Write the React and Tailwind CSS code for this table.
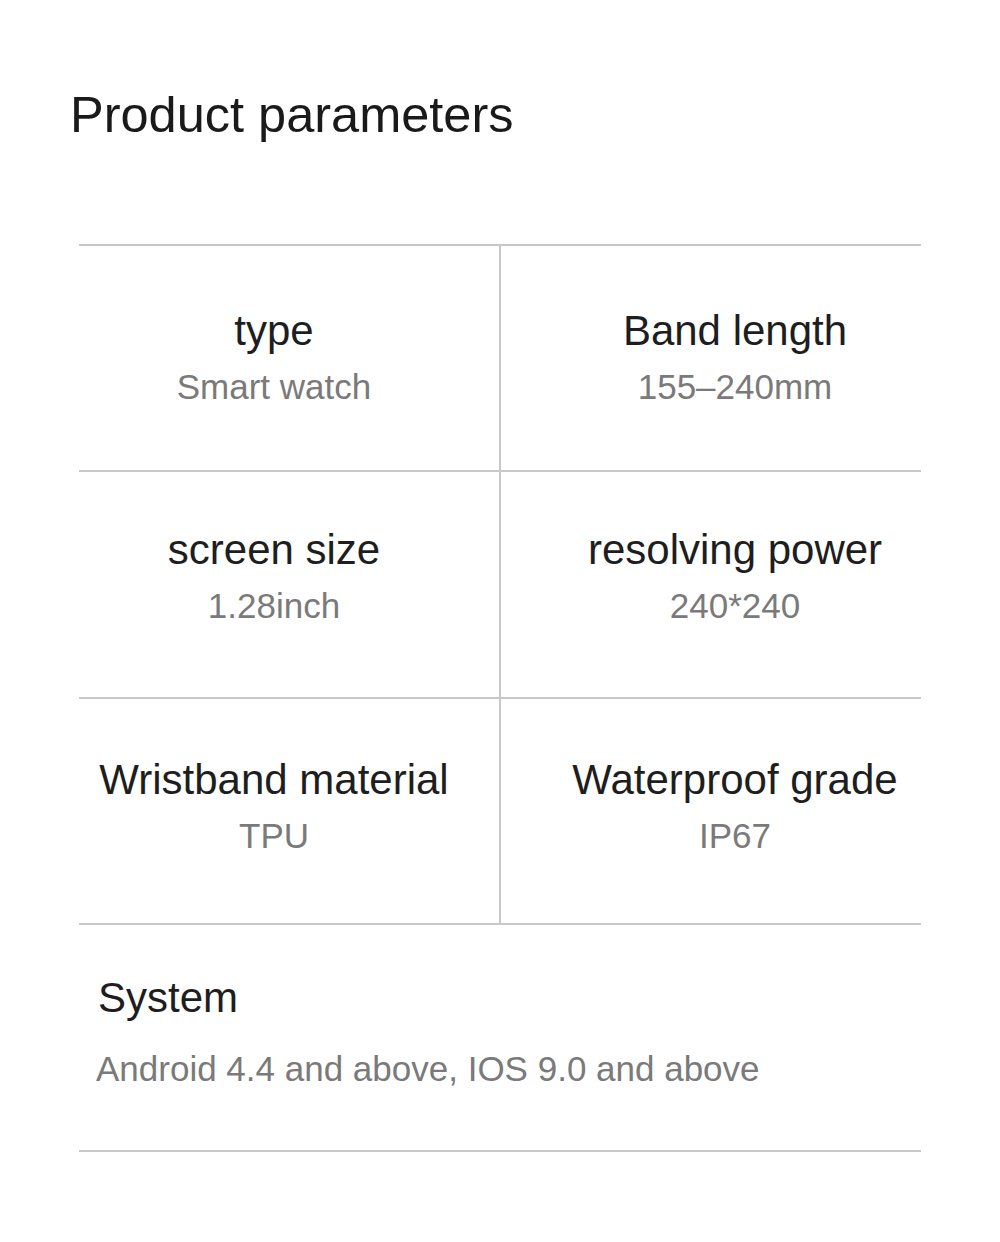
const params = [
  [
    { label: 'type', value: 'Smart watch' },
    { label: 'Band length', value: '155–240mm' },
    'pt-[64px]',
    'h-[226px]',
  ],
  [
    { label: 'screen size', value: '1.28inch' },
    { label: 'resolving power', value: '240*240' },
    'pt-[57px]',
    'h-[227px]',
  ],
  [
    { label: 'Wristband material', value: 'TPU' },
    { label: 'Waterproof grade', value: 'IP67' },
    'pt-[60px]',
    'h-[226px]',
  ],
];

function Cell({ item, side, pad }) {
  return (
    <div
      className={`flex flex-col items-center ${pad} ${
        side === 'left' ? 'pr-[30px] border-r-2 border-[#c8c8c8]' : 'pl-[48px]'
      }`}
    >
      <div className="text-[42px] leading-none text-[#1e1e1e] whitespace-nowrap">{item.label}</div>
      <div className="mt-[17px] text-[35px] leading-none text-[#7a7a7a] whitespace-nowrap">{item.value}</div>
    </div>
  );
}

export default function App() {
  return (
    <div className="w-[1000px] h-[1242px] bg-white font-['Liberation_Sans',Arial,sans-serif]">
      <h1 className="pt-[90px] pl-[70px] text-[50.5px] leading-none text-[#1a1a1a] font-normal">
        Product parameters
      </h1>

      <div className="mt-[103.5px] ml-[79px] w-[842px] border-t-2 border-[#c8c8c8]">
        {params.map(([left, right, pad, h], i) => (
          <div key={i} className={`grid grid-cols-[422px_1fr] ${h} border-b-2 border-[#c8c8c8]`}>
            <Cell item={left} side="left" pad={pad} />
            <Cell item={right} side="right" pad={pad} />
          </div>
        ))}

        {/* System row spans the full width */}
        <div className="h-[227px] border-b-2 border-[#c8c8c8] pt-[52px] pl-[17px]">
          <div className="pl-[2px] text-[42px] leading-none text-[#1e1e1e]">System</div>
          <div className="mt-[32px] text-[35px] leading-none text-[#7a7a7a]">
            Android 4.4 and above, IOS 9.0 and above
          </div>
        </div>
      </div>
    </div>
  );
}
